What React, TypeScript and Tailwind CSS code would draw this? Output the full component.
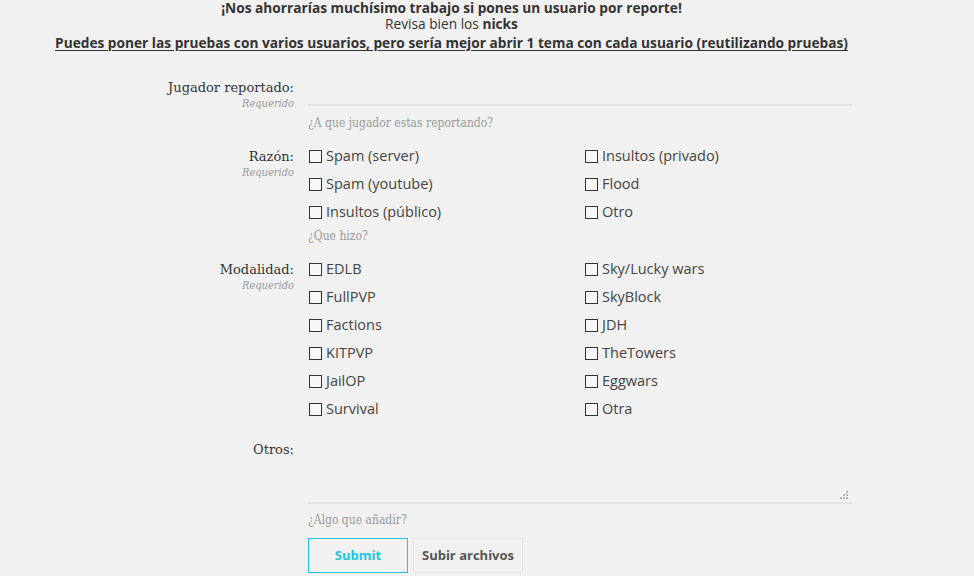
import React from 'react';

const razones = [
  ['Spam (server)', 'Insultos (privado)'],
  ['Spam (youtube)', 'Flood'],
  ['Insultos (público)', 'Otro'],
];

const modalidades = [
  ['EDLB', 'Sky/Lucky wars'],
  ['FullPVP', 'SkyBlock'],
  ['Factions', 'JDH'],
  ['KITPVP', 'TheTowers'],
  ['JailOP', 'Eggwars'],
  ['Survival', 'Otra'],
];

const serif = 'font-["DejaVu_Serif","Liberation_Serif",serif]';
const narrowSerif = 'font-["DejaVu_Serif_Condensed","Liberation_Serif",serif]';

function Label({ text, required, pad }: { text: string; required?: boolean; pad: string }) {
  return (
    <div className={`w-[294px] shrink-0 text-right ${pad}`}>
      <div className={`${serif} text-[13px] leading-[20px] text-[#333]`}>{text}</div>
      {required && (
        <div className={`${narrowSerif} text-[11px] leading-[12px] italic text-[#999]`}>Requerido</div>
      )}
    </div>
  );
}

function Hint({ text, mt }: { text: string; mt: string }) {
  return <div className={`${narrowSerif} text-[12px] leading-[16px] text-[#999] ${mt}`}>{text}</div>;
}

function Check({ label }: { label: string }) {
  return (
    <label className="flex h-[28px] items-center gap-[4px]">
      <span className="ml-[1px] h-[13px] w-[13px] border border-[#333] bg-[#f7f7f7]" />
      <span className="text-[14.5px] text-[#444]">{label}</span>
    </label>
  );
}

function CheckGrid({ rows }: { rows: string[][] }) {
  return (
    <div className="grid grid-cols-2">
      {rows.map(([a, b]) => (
        <React.Fragment key={a}>
          <Check label={a} />
          <Check label={b} />
        </React.Fragment>
      ))}
    </div>
  );
}

function Grip() {
  return (
    <svg className="pointer-events-none absolute bottom-[5px] right-[4px]" width="8" height="8" viewBox="0 0 8 8">
      <g fill="#b5b5b5">
        <rect x="6" y="0" width="2" height="2" />
        <rect x="3" y="3" width="2" height="2" />
        <rect x="6" y="3" width="2" height="2" />
        <rect x="0" y="6" width="2" height="2" />
        <rect x="3" y="6" width="2" height="2" />
        <rect x="6" y="6" width="2" height="2" />
      </g>
    </svg>
  );
}

export default function App() {
  return (
    <div className='min-h-[577px] bg-[#f1f1f1] font-["Open_Sans","Noto_Sans",sans-serif] text-[#333]'>
      <div className="w-[903px]">
        <div className="text-center text-[13.7px]">
          <div className="mt-[-1px] leading-[17px] font-bold">
            ¡Nos ahorrarías muchísimo trabajo si pones un usuario por reporte!
          </div>
          <div className="leading-[16px]">
            Revisa bien los <b>nicks</b>
          </div>
          <div className="mt-[2px] leading-[18px] font-bold underline underline-offset-2">
            Puedes poner las pruebas con varios usuarios, pero sería mejor abrir 1 tema con cada usuario (reutilizando pruebas)
          </div>
        </div>

        <div className="mt-[24px] flex gap-[14px]">
          <Label text="Jugador reportado:" required pad="pt-[2px]" />
          <div className="w-[544px]">
            <input className="block h-[30px] w-full border-b-2 border-[#e3e3e3] bg-transparent outline-none" />
            <Hint text="¿A que jugador estas reportando?" mt="mt-[9px]" />
          </div>
        </div>

        <div className="mt-[11px] flex gap-[14px]">
          <Label text="Razón:" required pad="pt-[5px]" />
          <div className="w-[552px]">
            <CheckGrid rows={razones} />
            <Hint text="¿Que hizo?" mt="mt-[2px]" />
          </div>
        </div>

        <div className="mt-[11px] flex gap-[14px]">
          <Label text="Modalidad:" required pad="pt-[5px]" />
          <div className="w-[552px]">
            <CheckGrid rows={modalidades} />
          </div>
        </div>

        <div className="mt-[14px] flex gap-[14px]">
          <Label text="Otros:" pad="pt-[3px]" />
          <div className="w-[544px]">
            <div className="relative">
              <textarea className="block h-[67px] w-full resize-none border-b-2 border-[#e3e3e3] bg-transparent outline-none" />
              <Grip />
            </div>
            <Hint text="¿Algo que añadir?" mt="mt-[8px]" />
            <div className="mt-[10px] flex gap-[5px]">
              <button className="h-[35px] w-[100px] border border-[#1ec6dc] text-[13px] font-bold text-[#1ec6dc]">
                Submit
              </button>
              <button className="h-[35px] w-[110px] border border-[#e3e3e3] text-[13px] font-bold text-[#555]">
                Subir archivos
              </button>
            </div>
          </div>
        </div>
      </div>
    </div>
  );
}
